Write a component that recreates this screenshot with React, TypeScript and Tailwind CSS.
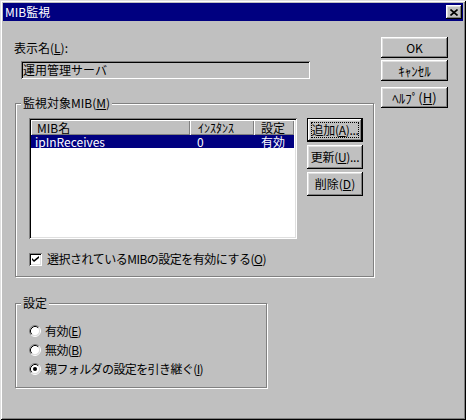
import React from "react";

const raised =
  "shadow-[inset_-1px_-1px_#000,inset_1px_1px_#fff,inset_-2px_-2px_#808080,inset_2px_2px_#dfdfdf]";
const sunken =
  "shadow-[inset_1px_1px_#808080,inset_-1px_-1px_#fff,inset_2px_2px_#000,inset_-2px_-2px_#dfdfdf]";
const headerCell =
  "flex items-center bg-[#c0c0c0] shadow-[inset_1px_1px_#fff,inset_-1px_-1px_#808080]";

function Key({ k }: { k: string }) {
  return <span className="underline underline-offset-[1px]">{k}</span>;
}

function Button({
  children,
  className = "",
}: {
  children: React.ReactNode;
  className?: string;
}) {
  return (
    <div
      className={`flex items-center justify-center bg-[#c0c0c0] ${raised} ${className}`}
    >
      {children}
    </div>
  );
}

function Group({
  label,
  className,
  children,
}: {
  label: React.ReactNode;
  className: string;
  children: React.ReactNode;
}) {
  return (
    <div
      className={`relative border border-[#808080] shadow-[inset_1px_1px_#fff,1px_1px_#fff] ${className}`}
    >
      <span className="absolute -top-[8px] left-[5px] bg-[#c0c0c0] px-[2px]">
        {label}
      </span>
      {children}
    </div>
  );
}

function Radio({ checked }: { checked?: boolean }) {
  return (
    <svg width="12" height="12" viewBox="0 0 12 12" className="shrink-0">
      <circle cx="6" cy="6" r="4.5" fill="#fff" />
      <path d="M2.11 9.89 A5.5 5.5 0 0 1 9.89 2.11" fill="none" stroke="#808080" />
      <path d="M9.89 2.11 A5.5 5.5 0 0 1 2.11 9.89" fill="none" stroke="#fff" />
      <path d="M2.82 9.18 A4.5 4.5 0 0 1 9.18 2.82" fill="none" stroke="#000" />
      <path d="M9.18 2.82 A4.5 4.5 0 0 1 2.82 9.18" fill="none" stroke="#dfdfdf" />
      {checked ? <circle cx="6" cy="6" r="2" fill="#000" /> : null}
    </svg>
  );
}

function RadioRow({
  checked,
  children,
}: {
  checked?: boolean;
  children: React.ReactNode;
}) {
  return (
    <div className="flex h-[19px] items-center gap-[4px]">
      <Radio checked={checked} />
      <span className="tracking-[-0.6px]">{children}</span>
    </div>
  );
}

export default function App() {
  return (
    <div className="h-[420px] w-[466px] bg-[#c0c0c0] p-[3px] font-['Noto_Sans_CJK_JP',sans-serif] text-[12px] leading-[14px] text-black shadow-[inset_1px_1px_#dfdfdf,inset_-1px_-1px_#000,inset_2px_2px_#fff,inset_-2px_-2px_#808080]">
      {/* title bar */}
      <div className="flex h-[18px] items-center justify-between bg-[#000080] pl-[2px] pr-[1px]">
        <span className="text-white">MIB監視</span>
        <div
          className={`flex h-[14px] w-[16px] items-center justify-center bg-[#c0c0c0] ${raised}`}
        >
          <svg width="8" height="7" viewBox="0 0 8 7">
            <path d="M0.5 0.5 L7.5 6.5 M7.5 0.5 L0.5 6.5" stroke="#000" strokeWidth="1.6" />
          </svg>
        </div>
      </div>

      <div className="flex">
        {/* left column */}
        <div className="w-[371px] pl-[11px]">
          <div className="mt-[20px]">
            表示名(<Key k="L" />):
          </div>
          <div className="ml-[7px] mt-[6px] flex h-[18px] w-[289px] items-center bg-[#c0c0c0] pl-[2px] shadow-[inset_1px_1px_#808080,inset_-1px_-1px_#fff,inset_2px_2px_#000]">
            運用管理サーバ
          </div>

          <Group
            label={
              <>
                監視対象MIB(<Key k="M" />)
              </>
            }
            className="ml-[1px] mt-[24px] h-[174px] w-[359px] pl-[13px] pt-[14px]"
          >
            <div className="flex items-start gap-[10px]">
              <div className={`h-[121px] w-[268px] bg-white p-[2px] ${sunken}`}>
                <div className="flex h-[15px] leading-[13px]">
                  <div className={`${headerCell} w-[159px] pl-[6px]`}>MIB名</div>
                  <div className={`${headerCell} w-[64px] pl-[8px]`}>ｲﾝｽﾀﾝｽ</div>
                  <div className={`${headerCell} w-[40px] pl-[7px]`}>設定</div>
                </div>
                <div className="flex h-[13px] w-[263px] items-center bg-[#000080] leading-[12px] text-white">
                  <div className="w-[159px] pl-[4px]">ipInReceives</div>
                  <div className="w-[64px] pl-[7px]">0</div>
                  <div className="w-[40px] pl-[7px]">有効</div>
                </div>
              </div>

              <div className="flex flex-col gap-[3px]">
                <div className="relative h-[24px] w-[56px] border border-black">
                  <Button className="h-full w-full tracking-[-0.3px]">
                    追加(<Key k="A" />)...
                  </Button>
                  <div className="absolute inset-[3px] border border-dotted border-black" />
                </div>
                <Button className="h-[24px] w-[56px] tracking-[-0.3px]">
                  更新(<Key k="U" />)...
                </Button>
                <Button className="h-[24px] w-[56px]">
                  削除(<Key k="D" />)
                </Button>
              </div>
            </div>

            <div className="mt-[13px] flex items-center gap-[5px]">
              <div
                className={`flex h-[13px] w-[13px] shrink-0 items-center justify-center bg-white ${sunken}`}
              >
                <svg width="7" height="7" viewBox="0 0 7 7">
                  <path d="M0 2 L2 4 L7 0 L7 2 L2 6 L0 4 Z" fill="#000" />
                </svg>
              </div>
              <span className="tracking-[-0.5px]">
                選択されているMIBの設定を有効にする(<Key k="O" />)
              </span>
            </div>
          </Group>

          <Group
            label="設定"
            className="ml-[1px] mt-[26px] h-[85px] w-[252px] pl-[13px] pt-[17px]"
          >
            <RadioRow>
              有効(<Key k="E" />)
            </RadioRow>
            <RadioRow>
              無効(<Key k="B" />)
            </RadioRow>
            <RadioRow checked>
              親フォルダの設定を引き継ぐ(<Key k="I" />)
            </RadioRow>
          </Group>
        </div>

        {/* right column */}
        <div className="ml-[7px] flex flex-col pt-[16px]">
          <Button className="h-[21px] w-[67px]">OK</Button>
          <Button className="mt-[2px] h-[21px] w-[67px] text-[13px]">ｷｬﾝｾﾙ</Button>
          <Button className="mt-[6px] h-[21px] w-[67px] text-[13px]">
            ﾍﾙﾌﾟ(<Key k="H" />)
          </Button>
        </div>
      </div>
    </div>
  );
}
